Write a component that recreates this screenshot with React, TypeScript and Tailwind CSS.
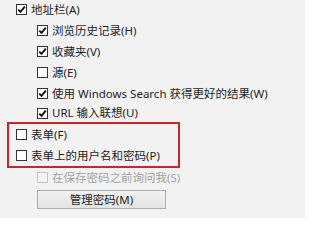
import React from "react";

interface OptionProps {
  label: string;
  checked?: boolean;
  disabled?: boolean;
  indent?: boolean;
  height?: string;
}

const Box: React.FC<{ checked?: boolean; disabled?: boolean }> = ({ checked, disabled }) => (
  <span
    className={
      disabled
        ? "flex h-[11px] w-[11px] shrink-0 items-center justify-center border border-[#c4c4c4] bg-[#f4f4f4]"
        : "flex h-[11px] w-[11px] shrink-0 items-center justify-center border border-[#333333] bg-white"
    }
  >
    {checked && (
      <svg width="9" height="9" viewBox="0 0 9 9">
        <path d="M1.3 4.6 L3.5 6.9 L7.8 1.6" fill="none" stroke="#111" strokeWidth="1.9" />
      </svg>
    )}
  </span>
);

const Option: React.FC<OptionProps> = ({ label, checked, disabled, indent, height = "h-[21px]" }) => (
  <div className={`flex items-center gap-[4px] ${height} ${indent ? "pl-[37px]" : "pl-[16px]"}`}>
    <Box checked={checked} disabled={disabled} />
    <span className={disabled ? "text-[#a3a3a3]" : "text-[#1e1e1e]"}>{label}</span>
  </div>
);

export default function App() {
  return (
    <div
      className="h-[218px] w-[305px] overflow-hidden bg-[#f2f2f2] text-[11.5px] leading-none"
      style={{ fontFamily: '"Noto Sans", "Noto Sans CJK SC", sans-serif' }}
    >
      <div className="-mt-px">
        <Option label="地址栏(A)" checked />
        <Option label="浏览历史记录(H)" checked indent />
        <Option label="收藏夹(V)" checked indent />
        <Option label="源(E)" indent />
        <Option label="使用 Windows Search 获得更好的结果(W)" checked indent />
        <Option label="URL 输入联想(U)" checked indent height="h-[18px]" />

        <div className="ml-[7px] w-[173px] border-2 border-[#c3282e]">
          <div className="flex h-[21px] items-center gap-[4px] pl-[7px]">
            <Box />
            <span className="text-[#1e1e1e]">表单(F)</span>
          </div>
          <div className="flex h-[21px] items-center gap-[4px] pl-[7px]">
            <Box />
            <span className="text-[#1e1e1e]">表单上的用户名和密码(P)</span>
          </div>
        </div>

        <Option label="在保存密码之前询问我(S)" disabled indent height="h-[19px]" />

        <div className="ml-[37px] mt-[3px] flex h-[19px] w-[129px] items-center justify-center border border-[#adadad] bg-gradient-to-b from-[#f2f2f2] to-[#e3e3e3] text-[#1e1e1e]">
          管理密码(M)
        </div>
      </div>
    </div>
  );
}
